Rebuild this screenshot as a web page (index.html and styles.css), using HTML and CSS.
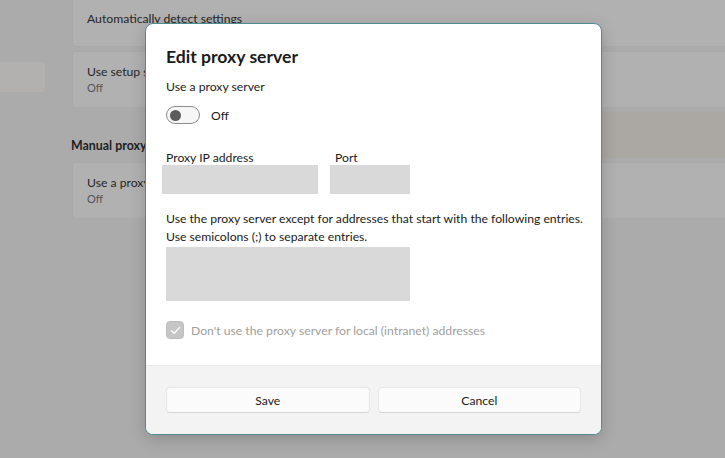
FILE: index.html
```html
<!DOCTYPE html>
<html>
<head>
<meta charset="utf-8">
<link rel="stylesheet" href="styles.css">
</head>
<body>
<div class="page">
  <div class="nav">
    <div class="nav-item"></div>
  </div>
  <div class="content">
    <div class="card card-first">
      <div class="card-title">Automatically detect settings</div>
    </div>
    <div class="card">
      <div class="card-text">
        <div class="card-title">Use setup script</div>
        <div class="card-sub">Off</div>
      </div>
    </div>
    <div class="section-head">Manual proxy setup</div>
    <div class="card">
      <div class="card-text">
        <div class="card-title">Use a proxy server</div>
        <div class="card-sub">Off</div>
      </div>
    </div>
  </div>
</div>

<div class="dialog">
  <div class="dialog-body">
    <h1 class="dialog-title">Edit proxy server</h1>
    <div class="label">Use a proxy server</div>
    <div class="toggle-row">
      <span class="toggle"><span class="knob"></span></span>
      <span class="toggle-text">Off</span>
    </div>
    <div class="fields">
      <div class="field field-ip">
        <div class="field-label">Proxy IP address</div>
        <div class="input input-ip"></div>
      </div>
      <div class="field field-port">
        <div class="field-label">Port</div>
        <div class="input input-port"></div>
      </div>
    </div>
    <p class="para">Use the proxy server except for addresses that start with the following entries.<br>Use semicolons (;) to separate entries.</p>
    <div class="input textarea"></div>
    <div class="check-row">
      <span class="checkbox">
        <svg width="11" height="9" viewBox="0 0 11 9"><path d="M1.5 4.8 L4.2 7.3 L9.5 1.6" fill="none" stroke="#ffffff" stroke-width="1.3" stroke-linecap="round" stroke-linejoin="round"/></svg>
      </span>
      <span class="check-text">Don't use the proxy server for local (intranet) addresses</span>
    </div>
  </div>
  <div class="dialog-footer">
    <button class="btn">Save</button>
    <button class="btn">Cancel</button>
  </div>
</div>
</body>
</html>
```

FILE: styles.css
```css
html, body {
  margin: 0;
  padding: 0;
}
body {
  width: 725px;
  height: 458px;
  overflow: hidden;
  background: #acabab;
  font-family: Lato, "Noto Sans", sans-serif;
  position: relative;
}
.page {
  display: flex;
  height: 458px;
}
.nav {
  width: 72px;
  flex: none;
  padding-top: 62px;
}
.nav-item {
  width: 45px;
  height: 30px;
  background: #b2b1b0;
  border-radius: 0 4px 4px 0;
}
.content {
  flex: 1;
  display: flex;
  flex-direction: column;
  gap: 4px;
  margin-top: -10px;
}
.card {
  height: 55px;
  flex: none;
  background: #b1b1b1;
  border: 1px solid #a9a9a9;
  border-right: none;
  border-radius: 4px 0 0 4px;
  display: flex;
  align-items: center;
  padding-left: 14px;
  color: #262626;
  font-size: 12.2px;
}
.card-title {
  line-height: 16px;
}
.card-sub {
  font-size: 11px;
  line-height: 16px;
  color: #555;
}
.section-head {
  height: 46px;
  box-sizing: border-box;
  flex: none;
  padding-top: 26px;
  line-height: 16px;
  font-size: 12.4px;
  font-weight: 700;
  color: #222;
  margin-left: -1px;
  background: linear-gradient(to right, #acabab 0, #acabab 530px, #aba7a3 530px);
}
.dialog {
  position: absolute;
  left: 145px;
  top: 23px;
  width: 455px;
  height: 410px;
  background: #ffffff;
  border: 1px solid #4e8c92;
  border-radius: 8px;
  box-shadow: 0 4px 16px rgba(0,0,0,0.18);
  display: flex;
  flex-direction: column;
  overflow: hidden;
  color: #1b1b1b;
}
.dialog-body {
  flex: 1;
  padding: 21px 20px 0 20px;
}
.dialog-title {
  margin: 0;
  font-size: 17.6px;
  font-weight: 700;
  line-height: 24px;
}
.label {
  margin-top: 9px;
  font-size: 12.2px;
  line-height: 18px;
}
.toggle-row {
  margin-top: 10px;
  display: flex;
  align-items: center;
  height: 18px;
}
.toggle {
  box-sizing: border-box;
  width: 34px;
  height: 18px;
  border: 1px solid #8c8c8c;
  border-radius: 9px;
  background: #f6f6f6;
  display: flex;
  align-items: center;
  padding-left: 3px;
}
.knob {
  width: 11px;
  height: 11px;
  border-radius: 50%;
  background: #5c5c5c;
}
.toggle-text {
  margin-left: 11px;
  font-size: 12.2px;
}
.fields {
  margin-top: 26px;
  display: flex;
  gap: 12px;
  margin-left: -4px;
}
.field-label {
  font-size: 12.2px;
  line-height: 16px;
  margin-left: 4px;
  margin-bottom: -1px;
}
.field-port .field-label {
  margin-left: 5px;
}
.input {
  background: #d9d9d9;
  height: 29px;
}
.input-ip {
  width: 156px;
}
.input-port {
  width: 80px;
}
.para {
  margin: 16px 0 0 0;
  font-size: 12.2px;
  line-height: 18px;
  white-space: nowrap;
}
.textarea {
  margin-top: 1px;
  width: 244px;
  height: 54px;
}
.check-row {
  margin-top: 20px;
  display: flex;
  align-items: center;
  height: 18px;
}
.checkbox {
  box-sizing: border-box;
  width: 18px;
  height: 18px;
  border-radius: 4px;
  background: #c6c6c6;
  border: 1px solid #bdbdbd;
  display: flex;
  align-items: center;
  justify-content: center;
}
.check-text {
  margin-left: 7px;
  font-size: 12.2px;
  color: #a0a0a0;
}
.dialog-footer {
  height: 69px;
  background: #f3f3f3;
  border-top: 1px solid #ebebeb;
  box-sizing: border-box;
  display: flex;
  gap: 8px;
  padding: 21px 20px 0 20px;
}
.btn {
  flex: 1;
  height: 26px;
  background: #fbfbfb;
  border: 1px solid #e6e6e6;
  border-bottom-color: #d4d4d4;
  border-radius: 4px;
  font-family: Lato, "Noto Sans", sans-serif;
  font-size: 12.2px;
  color: #1b1b1b;
  padding: 0;
}
```
